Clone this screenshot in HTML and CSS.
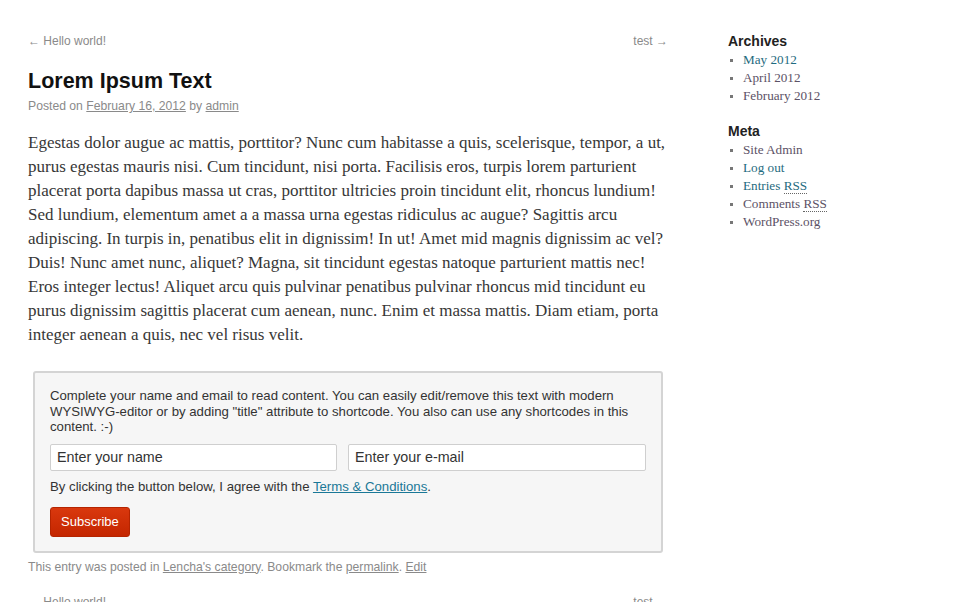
FILE: index.html
```html
<!DOCTYPE html>
<html>
<head>
<meta charset="utf-8">
<link rel="stylesheet" href="styles.css">
</head>
<body>
<div class="page">
  <main class="content">
    <nav class="post-nav">
      <a class="nav-link">&larr; Hello world!</a>
      <a class="nav-link">test &rarr;</a>
    </nav>
    <article class="post">
      <h1 class="post-title">Lorem Ipsum Text</h1>
      <div class="post-meta">Posted on <a class="meta-link">February 16, 2012</a> by <a class="meta-link">admin</a></div>
      <p class="post-body">Egestas dolor augue ac mattis, porttitor? Nunc cum habitasse a quis, scelerisque, tempor, a ut, purus egestas mauris nisi. Cum tincidunt, nisi porta. Facilisis eros, turpis lorem parturient placerat porta dapibus massa ut cras, porttitor ultricies proin tincidunt elit, rhoncus lundium! Sed lundium, elementum amet a a massa urna egestas ridiculus ac augue? Sagittis arcu adipiscing. In turpis in, penatibus elit in dignissim! In ut! Amet mid magnis dignissim ac vel? Duis! Nunc amet nunc, aliquet? Magna, sit tincidunt egestas natoque parturient mattis nec! Eros integer lectus! Aliquet arcu quis pulvinar penatibus pulvinar rhoncus mid tincidunt eu purus dignissim sagittis placerat cum aenean, nunc. Enim et massa mattis. Diam etiam, porta integer aenean a quis, nec vel risus velit.</p>
      <div class="optin">
        <div class="optin-intro">Complete your name and email to read content. You can easily edit/remove this text with modern WYSIWYG-editor or by adding "title" attribute to shortcode. You also can use any shortcodes in this content. :-)</div>
        <div class="optin-fields">
          <input class="optin-input" type="text" placeholder="Enter your name">
          <input class="optin-input" type="text" placeholder="Enter your e-mail">
        </div>
        <div class="optin-terms">By clicking the button below, I agree with the <a class="terms-link">Terms &amp; Conditions</a>.</div>
        <button class="optin-button">Subscribe</button>
      </div>
      <footer class="entry-footer">This entry was posted in <a class="meta-link">Lencha's category</a>. Bookmark the <a class="meta-link">permalink</a>. <a class="meta-link">Edit</a></footer>
    </article>
    <nav class="post-nav bottom-nav">
      <a class="nav-link">&larr; Hello world!</a>
      <a class="nav-link">test &rarr;</a>
    </nav>
  </main>
  <aside class="sidebar">
    <section class="widget">
      <h3 class="widget-title">Archives</h3>
      <ul class="widget-list">
        <li><a class="w-link">May 2012</a></li>
        <li><a class="w-link visited">April 2012</a></li>
        <li><a class="w-link visited">February 2012</a></li>
      </ul>
    </section>
    <section class="widget">
      <h3 class="widget-title">Meta</h3>
      <ul class="widget-list">
        <li><a class="w-link visited">Site Admin</a></li>
        <li><a class="w-link">Log out</a></li>
        <li><a class="w-link">Entries <abbr class="abbr">RSS</abbr></a></li>
        <li><a class="w-link visited">Comments <abbr class="abbr">RSS</abbr></a></li>
        <li><a class="w-link visited">WordPress.org</a></li>
      </ul>
    </section>
  </aside>
</div>
</body>
</html>
```

FILE: styles.css
```css
html, body {
  margin: 0;
  padding: 0;
  background: #fff;
  overflow: hidden;
}
body {
  font-family: "Liberation Sans", Arial, sans-serif;
  color: #373737;
}
.page {
  display: flex;
  align-items: flex-start;
  padding: 33px 0 0 28px;
}
.content {
  width: 640px;
  flex: none;
}
.post-nav {
  display: flex;
  justify-content: space-between;
  font-size: 12px;
  line-height: 16px;
}
.nav-link {
  color: #8a8a8a;
}
.post-title {
  margin: 19px 0 0;
  font-size: 21.5px;
  line-height: 26px;
  font-weight: bold;
  color: #111;
}
.post-meta {
  margin-top: 4px;
  font-size: 12.2px;
  line-height: 16px;
  color: #8a8a8a;
}
.meta-link {
  color: #8a8a8a;
  text-decoration: underline;
}
.post-body {
  margin: 17px 0 0;
  font-family: "Liberation Serif", "Times New Roman", serif;
  font-size: 17px;
  line-height: 24px;
  color: #373737;
}
.optin {
  margin: 24px 5px 0 5px;
  border: 2px solid #d4d4d4;
  border-radius: 3px;
  background: #f6f6f6;
  padding: 15px 15px 14px 15px;
  font-size: 13.2px;
  color: #333;
}
.optin-intro {
  line-height: 15.5px;
}
.optin-fields {
  display: grid;
  grid-template-columns: 287px 298px;
  gap: 11px;
  margin-top: 9px;
}
.optin-input {
  box-sizing: border-box;
  width: 100%;
  height: 27px;
  margin: 0;
  padding: 2px 6px;
  border: 1px solid #cfcfcf;
  border-radius: 2px;
  background: #fff;
  font-family: "Liberation Sans", Arial, sans-serif;
  font-size: 14.3px;
  color: #333;
}
.optin-input::placeholder {
  color: #333;
  opacity: 1;
}
.optin-terms {
  margin-top: 8px;
  line-height: 16px;
}
.terms-link {
  color: #1a7897;
  text-decoration: underline;
}
.optin-button {
  display: block;
  margin-top: 12px;
  height: 30px;
  padding: 0 10px;
  border: 1px solid #b52400;
  border-radius: 3px;
  background: linear-gradient(#d9380e, #c42600);
  color: #fff;
  font-family: "Liberation Sans", Arial, sans-serif;
  font-size: 13px;
}
.entry-footer {
  margin-top: 6px;
  font-size: 12.2px;
  line-height: 16px;
  color: #8a8a8a;
}
.bottom-nav {
  margin-top: 19px;
}
.sidebar {
  margin-left: 60px;
  width: 200px;
  flex: none;
}
.widget {
  margin-bottom: 18px;
}
.widget-title {
  margin: 0;
  font-size: 14px;
  line-height: 16px;
  font-weight: bold;
  color: #222;
}
.widget-list {
  margin: 2px 0 0;
  padding: 0 0 0 15px;
  list-style: square;
  font-family: "Liberation Serif", "Times New Roman", serif;
  font-size: 13.2px;
  line-height: 18px;
  color: #666;
}
.widget-list li::marker {
  color: #777;
  font-size: 10px;
}
.w-link {
  color: #1f6b80;
  text-decoration: none;
}
.w-link.visited {
  color: #5c5266;
}
.abbr {
  text-decoration: none;
  border-bottom: 1px dotted #666;
}
```
